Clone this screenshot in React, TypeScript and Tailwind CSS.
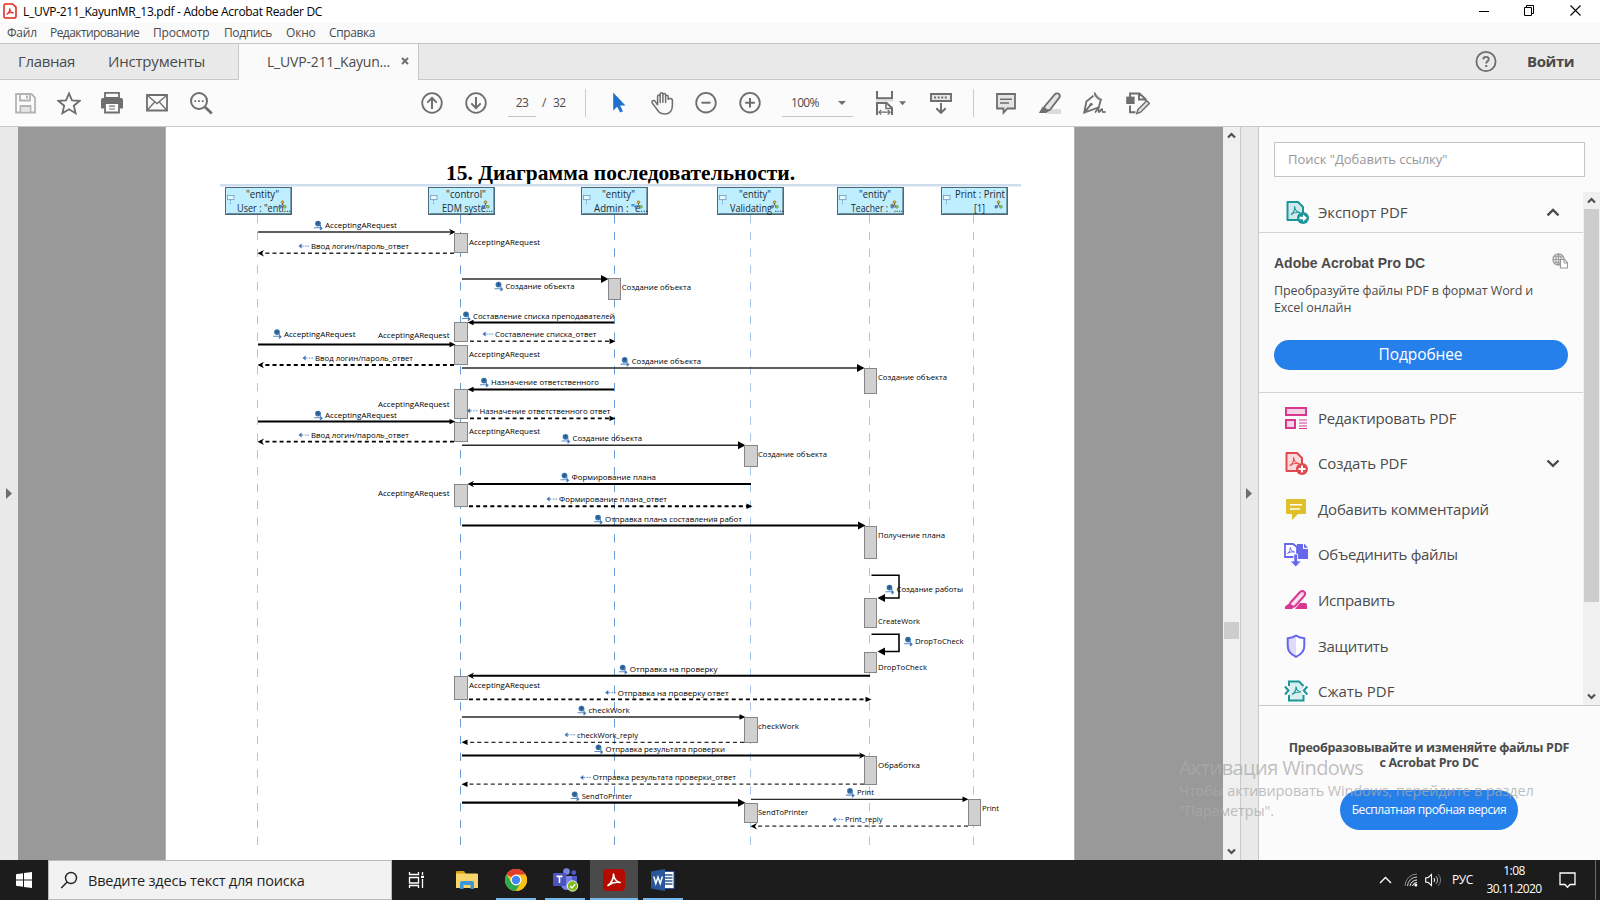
import type { ReactNode } from "react";

const G = "#6e6e6e";

function Icon({ children, size = 24, className = "" }: { children: ReactNode; size?: number; className?: string }) {
  return (
    <svg width={size} height={size} viewBox={`0 0 ${size} ${size}`} fill="none" className={`shrink-0 ${className}`}>
      {children}
    </svg>
  );
}

/* ---------- Window chrome ---------- */

function TitleBar() {
  return (
    <div className="flex h-[23px] items-center bg-white text-black">
      <svg width="14" height="16" viewBox="0 0 14 16" className="ml-[3px] -mt-px" fill="none">
        <path d="M2.5 1H9.5L13 4.2V13.5A1.5 1.5 0 0 1 11.5 15H2.5A1.5 1.5 0 0 1 1 13.5V2.5A1.5 1.5 0 0 1 2.5 1Z" stroke="#e2231a" strokeWidth="1.5" fill="#fff" />
        <path d="M3.5 11.5C5 10.5 6.8 7.5 6.8 5.2M6.8 5.2C6.8 7.5 8.5 9.8 10.8 10M3.5 11.5C5 9.8 8.5 9.2 10.8 10" stroke="#e2231a" strokeWidth="1.1" />
      </svg>
      <span className="ml-[6px] w-[310px] whitespace-nowrap text-[12px] tracking-[-0.29px]">L_UVP-211_KayunMR_13.pdf - Adobe Acrobat Reader DC</span>
      <div className="ml-auto flex items-center pr-[19px] pb-[2px]">
        <svg width="10" height="10" viewBox="0 0 10 10"><path d="M0 5.5H10" stroke="#000" /></svg>
        <svg width="11" height="11" viewBox="0 0 11 11" className="ml-[35px]" fill="none"><path d="M.5 2.5H7.5V10.5H.5ZM2.5 2.5V.5H9.5V8.5H7.5" stroke="#000" /></svg>
        <svg width="11" height="11" viewBox="0 0 11 11" className="ml-[35px]"><path d="M.5 .5L10.5 10.5M10.5 .5L.5 10.5" stroke="#000" strokeWidth="1.1" /></svg>
      </div>
    </div>
  );
}

function MenuBar() {
  return (
    <div className="flex h-[20px] items-center bg-[#fafafa] pl-[7px] text-[12px] leading-[18px] text-[#4b4b4b] whitespace-nowrap">
      <span className="w-[43px] tracking-[-0.2px]">Файл</span>
      <span className="w-[103px] tracking-[-0.56px]">Редактирование</span>
      <span className="w-[71px] tracking-[-0.2px]">Просмотр</span>
      <span className="w-[62px] tracking-[-0.4px]">Подпись</span>
      <span className="w-[43px] tracking-[-0.2px]">Окно</span>
      <span className="tracking-[-0.4px]">Справка</span>
    </div>
  );
}

function TabBar() {
  return (
    <div className="flex h-[37px] border-t border-[#c8c8c8] bg-[#e9e9e9] text-[15px] text-[#4b4b4b] whitespace-nowrap">
      <div className="flex w-[238px] items-center border-b border-[#c8c8c8] pl-[18px]">
        <span className="w-[90px] tracking-[-0.35px]">Главная</span>
        <span className="tracking-[-0.2px]">Инструменты</span>
      </div>
      <div className="flex w-[181px] items-center border-x border-[#c8c8c8] bg-[#fafafa] pb-px pl-[28px] text-[14px]">
        <span className="w-[134px] tracking-[-0.2px]">L_UVP-211_Kayun...</span>
        <svg width="8" height="8" viewBox="0 0 8 8" className="-mt-px"><path d="M1 1L7 7M7 1L1 7" stroke="#6e6e6e" strokeWidth="2" /></svg>
      </div>
      <div className="flex flex-1 items-center justify-end border-b border-[#c8c8c8] pr-[26px]">
        <Icon size={22}>
          <circle cx="11" cy="10.5" r="9.6" stroke={G} strokeWidth="1.8" />
          <path d="M8.3 8.4C8.4 6.8 9.5 5.9 11 5.9C12.6 5.9 13.7 6.8 13.7 8.2C13.7 10.2 11.2 10.4 11.2 12.6" stroke={G} strokeWidth="1.9" />
          <path d="M10.1 14.1H12.3V16H10.1Z" fill={G} />
        </Icon>
        <span className="ml-[30px] w-[47px] text-[15px] font-bold tracking-[-0.4px]">Войти</span>
      </div>
    </div>
  );
}

function Toolbar() {
  return (
    <div className="flex h-[47px] items-center border-b border-[#c8c8c8] bg-[#fbfbfb] pl-[13px] text-[12px] text-[#4b4b4b]">
      <Icon>
        <path d="M3 3H18.5L22 6.5V21.5H3Z" stroke="#b3b3b3" strokeWidth="1.8" />
        <path d="M7 3V9.5H17V3M7.5 21.5V15H17.5V21.5" stroke="#b3b3b3" strokeWidth="1.8" />
        <path d="M8.5 16H16.5V20.6H8.5Z" fill="#e4e4e4" />
        <path d="M13 4.5H15V7.5H13Z" fill="#b3b3b3" />
      </Icon>
      <Icon className="ml-[20px]">
        <path d="M12 2.4L15 9.3L22.6 9.9L16.8 14.7L18.6 22.2L12 18.2L5.4 22.2L7.2 14.7L1.4 9.9L9 9.3Z" stroke={G} strokeWidth="1.8" />
      </Icon>
      <Icon className="ml-[19px]">
        <path d="M5 1.8H19V7H5Z" stroke={G} strokeWidth="1.8" />
        <path d="M3 7H21A2 2 0 0 1 23 9V17.5H19.5V12.5H4.5V17.5H1V9A2 2 0 0 1 3 7Z" fill={G} />
        <path d="M5 12H19V21.5H5Z" fill="#fff" stroke={G} strokeWidth="1.8" />
        <path d="M9 15.2H15M9 18H15" stroke={G} strokeWidth="1.2" />
      </Icon>
      <Icon className="ml-[21px]">
        <path d="M2 4H22V19.5H2Z" stroke={G} strokeWidth="1.8" />
        <path d="M2.5 4.5L12 12.6L21.5 4.5M2.5 19L9.4 11.2M21.5 19L14.6 11.2" stroke={G} strokeWidth="1.3" />
      </Icon>
      <Icon className="ml-[20px]">
        <circle cx="10" cy="10" r="8" stroke={G} strokeWidth="2" />
        <path d="M16 16L22.8 22.6" stroke={G} strokeWidth="2.8" />
        <path d="M5.4 9.2H7.2V11H5.4ZM9.1 9.2H10.9V11H9.1ZM12.8 9.2H14.6V11H12.8Z" fill={G} />
      </Icon>
      <Icon className="ml-[207px]">
        <circle cx="12" cy="12" r="9.8" stroke={G} strokeWidth="1.8" />
        <path d="M12 18V7.5M7.3 11.6L12 6.9L16.7 11.6" stroke={G} strokeWidth="2" />
      </Icon>
      <Icon className="ml-[20px]">
        <circle cx="12" cy="12" r="9.8" stroke={G} strokeWidth="1.8" />
        <path d="M12 6V16.5M7.3 12.4L12 17.1L16.7 12.4" stroke={G} strokeWidth="2" />
      </Icon>
      <span className="ml-[20px] flex h-[28px] w-[28px] items-center justify-center border-b border-[#c4c4c4] tracking-[-0.6px]">23</span>
      <span className="ml-[6px] w-[11px]">/</span>
      <span className="w-[32px] tracking-[-0.6px]">32</span>
      <div className="h-[28px] w-px bg-[#cbcbcb]" />
      <Icon className="ml-[21px]">
        <path d="M6.2 1.5V19.5L10.2 15.7L13.2 21.6L15.9 20.2L13.1 14.4H18.4Z" fill="#1f71cc" />
      </Icon>
      <Icon className="ml-[19px]">
        <path d="M7.6 14.2V5.6C7.6 3.5 10.2 3.5 10.2 5.6V11.5V3.2C10.2 1.2 12.9 1.2 12.9 3.2V11.3V4C12.9 2 15.6 2 15.6 4V11.6V5.8C15.6 3.8 18.2 3.8 18.2 5.8V8.6C18.2 6.9 22.6 6.8 22.4 9.6V14C22.4 19.8 19.4 23 14.6 23C9.6 23 8.2 20.4 5.6 16.4L2.4 12.2C.9 9.8 4 8.6 5.4 10.6L7.6 14.2" stroke={G} strokeWidth="1.5" strokeLinejoin="round" />
      </Icon>
      <Icon className="ml-[20px]">
        <circle cx="12" cy="11.7" r="9.8" stroke={G} strokeWidth="1.8" />
        <path d="M7.5 11.7H16.5" stroke={G} strokeWidth="2" />
      </Icon>
      <Icon className="ml-[20px]">
        <circle cx="12" cy="11.7" r="9.8" stroke={G} strokeWidth="1.8" />
        <path d="M7.2 11.7H16.8M12 6.9V16.5" stroke={G} strokeWidth="2" />
      </Icon>
      <div className="ml-[20px] flex h-[28px] w-[71px] items-center border-b border-[#c4c4c4] pl-[9px]">
        <span className="w-[47px] tracking-[-0.7px]">100%</span>
        <svg width="8" height="4" viewBox="0 0 8 4"><path d="M0 0H8L4 4Z" fill={G} /></svg>
      </div>
      <svg width="36" height="24" viewBox="0 0 36 24" fill="none" className="ml-[20px]">
        <path d="M4 0V7.2H19V0" stroke={G} strokeWidth="2" />
        <path d="M3 9H20V10.6H3Z" fill="#dcdcdc" />
        <path d="M4 24V12H13.6L19 17V24" stroke={G} strokeWidth="2" />
        <path d="M13 12V17.5H19" stroke={G} strokeWidth="1.5" />
        <path d="M6 21.2H17M8.3 18.8L5.9 21.2L8.3 23.6M14.7 18.8L17.1 21.2L14.7 23.6" stroke={G} strokeWidth="1.2" />
        <path d="M26 10.3H33L29.5 14.3Z" fill={G} />
      </svg>
      <Icon className="ml-[20px]">
        <path d="M2 3H22V10H2Z" fill="#e9e9e9" stroke={G} strokeWidth="1.9" />
        <path d="M5 6.5H19" stroke={G} strokeWidth="2.2" strokeDasharray="2 1.6" />
        <path d="M12 12V21.5M7.3 17.2L12 21.8L16.7 17.2" stroke={G} strokeWidth="1.9" />
      </Icon>
      <div className="ml-[20px] h-[28px] w-px bg-[#cbcbcb]" />
      <Icon className="ml-[20px]">
        <path d="M3 3H21V17.5H13.5L9.5 21.8V17.5H3Z" fill="#e4e4e4" stroke={G} strokeWidth="1.8" />
        <path d="M6 8.2H18M6 12H15" stroke={G} strokeWidth="1.5" />
      </Icon>
      <Icon className="ml-[20px]">
        <path d="M9 23L12 18H23V23Z" fill="#dcdcdc" />
        <path d="M6.5 15.5L17 3.2C18.6 1.5 22.6 2.4 21.7 6L12 18.8C9.8 20 5.6 18.4 6.5 15.5Z" fill="#e4e4e4" stroke={G} strokeWidth="1.8" />
        <path d="M4.8 15.5L10.8 20.3L8.4 22H.8Z" fill={G} />
      </Icon>
      <Icon className="ml-[20px]">
        <path d="M13 1.5L21 8.5L18 11L11 5Z" fill="#dcdcdc" />
        <path d="M12.6 1.5C12.9 4.2 15.4 7 18.8 8.8L16.8 16.4L2.2 21.6L4.4 10.6L11.4 4.8M2.2 21.6L8.8 13.6" stroke={G} strokeWidth="1.8" />
        <circle cx="9.2" cy="13.2" r="1.5" fill={G} />
        <path d="M12.8 21.4C14.5 20.6 14.7 17.6 16.4 17.4C17 18.6 15.8 21 17.2 21C18.6 20.6 18.6 17.8 20 18C20.6 19 19.8 21 21.2 21.2L23.6 20.8" stroke={G} strokeWidth="1.7" />
      </Icon>
      <Icon className="ml-[20px]">
        <path d="M4 6V2.5H13.5L19.6 8.2V10M13 2.5V8.5H19.6" stroke={G} strokeWidth="1.9" />
        <path d="M.2 5.6H8.6V13H.2Z" fill={G} />
        <path d="M4 14.5V21.2H9.5" stroke={G} strokeWidth="1.9" />
        <path d="M12 18.5L20.8 9.8L23.4 12.4L14.6 21.2L10.8 22.6Z" fill="#e4e4e4" stroke={G} strokeWidth="1.5" />
      </Icon>
    </div>
  );
}

/* ---------- Sequence diagram ---------- */

type Head = { x: number; a: string; ax: [number, number]; b: string; bx: [number, number] };
const heads: Head[] = [
  { x: 225.5, a: '"entity"', ax: [246, 279], b: 'User : "enti...', bx: [237, 291] },
  { x: 428.5, a: '"control"', ax: [446, 486], b: "EDM syste...", bx: [442, 493] },
  { x: 581.5, a: '"entity"', ax: [602, 635], b: 'Admin : "e...', bx: [594, 648] },
  { x: 717.5, a: '"entity"', ax: [739, 771], b: "Validating :...", bx: [730, 784] },
  { x: 837.5, a: '"entity"', ax: [859, 891], b: 'Teacher : ":...', bx: [851, 903] },
  { x: 941.5, a: "Print : Print", ax: [955, 1005], b: "[1]", bx: [974, 985] },
];

const lifelines: [number, string][] = [
  [257.5, "#a9c6e6"],
  [460.5, "#6a9bd2"],
  [614.5, "#6a9bd2"],
  [750.5, "#a9c6e6"],
  [869.5, "#a9c6e6"],
  [973.5, "#a9c6e6"],
];

const bars: [number, number, number][] = [
  [454.5, 233.5, 252.5], [454.5, 322.5, 341.5], [454.5, 345.5, 364.5], [454.5, 389.5, 418.5],
  [454.5, 422.5, 441.5], [454.5, 484.5, 506.5], [454.5, 676.5, 699.5],
  [608.5, 278.5, 299.5], [744.5, 445.5, 466.5], [744.5, 717.5, 742.5], [744.5, 803.5, 822.5],
  [864.5, 368.5, 393.5], [864.5, 526.5, 558.5], [864.5, 598.5, 627.5], [864.5, 652.5, 672.5],
  [864.5, 756.5, 784.5], [968.5, 799.5, 825.5],
];

type ArrowHead = "open" | "small" | "big";
type Line = { from: number; to: number; y: number; w: number; head: ArrowHead; dash?: boolean };
const lines: Line[] = [
  { from: 258, to: 455, y: 232, w: 1.6, head: "open" },
  { from: 454, to: 258, y: 253.3, w: 1.6, head: "open", dash: true },
  { from: 462, to: 608, y: 279, w: 1.6, head: "big" },
  { from: 614, to: 468, y: 322.5, w: 2, head: "small" },
  { from: 470, to: 615, y: 341.3, w: 1.5, head: "small", dash: true },
  { from: 258, to: 455, y: 344.5, w: 2, head: "small" },
  { from: 454, to: 258, y: 365, w: 2, head: "open", dash: true },
  { from: 462, to: 864, y: 368, w: 1.5, head: "big" },
  { from: 614, to: 468, y: 389.5, w: 2, head: "small" },
  { from: 470, to: 615, y: 418.4, w: 1.8, head: "small", dash: true },
  { from: 258, to: 455, y: 421.6, w: 2, head: "small" },
  { from: 454, to: 258, y: 441.7, w: 1.8, head: "open", dash: true },
  { from: 462, to: 745, y: 445.2, w: 1.6, head: "big" },
  { from: 751, to: 468, y: 484, w: 2, head: "open" },
  { from: 469, to: 752, y: 506.2, w: 2, head: "small", dash: true },
  { from: 462, to: 865, y: 525.6, w: 2, head: "big" },
  { from: 870, to: 468, y: 675.8, w: 2, head: "open" },
  { from: 469, to: 871, y: 699.4, w: 1.7, head: "small", dash: true },
  { from: 462, to: 745, y: 717, w: 1.6, head: "small" },
  { from: 744, to: 462, y: 742.3, w: 1.3, head: "small", dash: true },
  { from: 462, to: 865, y: 755.6, w: 2, head: "open" },
  { from: 864, to: 462, y: 784.2, w: 1.3, head: "small", dash: true },
  { from: 462, to: 745, y: 802.7, w: 2.2, head: "big" },
  { from: 751, to: 968, y: 799.3, w: 1.2, head: "small" },
  { from: 968, to: 751, y: 826.2, w: 1.3, head: "open", dash: true },
];

type Mark = "op" | "re" | "";
const labels: [string, number, number, number, Mark][] = [
  ["AcceptingARequest", 325, 397, 228, "op"],
  ["Ввод логин/пароль_ответ", 311, 409, 249, "re"],
  ["AcceptingARequest", 469, 540, 245, ""],
  ["Создание объекта", 505.5, 574.5, 289, "op"],
  ["Создание объекта", 621.7, 691, 290.3, ""],
  ["Составление списка преподавателей", 473, 614.5, 318.7, "op"],
  ["Составление списка_ответ", 495, 596.5, 337, "re"],
  ["AcceptingARequest", 284, 355.5, 336.5, "op"],
  ["AcceptingARequest", 378, 449.5, 338, ""],
  ["Ввод логин/пароль_ответ", 315, 413, 361, "re"],
  ["AcceptingARequest", 469, 540, 357, ""],
  ["Создание объекта", 631.7, 701, 364.3, "op"],
  ["Создание объекта", 878, 947, 380, ""],
  ["Назначение ответственного", 491, 599, 385, "op"],
  ["AcceptingARequest", 378, 449.5, 407, ""],
  ["Назначение ответственного ответ", 479.5, 610.5, 413.7, "re"],
  ["AcceptingARequest", 325, 397, 418, "op"],
  ["Ввод логин/пароль_ответ", 311, 409, 438, "re"],
  ["AcceptingARequest", 469, 540, 434, ""],
  ["Создание объекта", 572.5, 642, 441.2, "op"],
  ["Создание объекта", 758, 827, 457, ""],
  ["Формирование плана", 571.5, 656, 480, "op"],
  ["AcceptingARequest", 378, 449.5, 496.3, ""],
  ["Формирование плана_ответ", 559, 667, 502, "re"],
  ["Отправка плана составления работ", 605, 742, 522, "op"],
  ["Получение плана", 878, 945, 538, ""],
  ["Создание работы", 896.5, 963, 592, "op"],
  ["CreateWork", 878, 920, 624, ""],
  ["DropToCheck", 915, 963.5, 644, "op"],
  ["DropToCheck", 878, 927, 669.5, ""],
  ["Отправка на проверку", 629.7, 717.5, 672, "op"],
  ["AcceptingARequest", 469, 540, 688, ""],
  ["Отправка на проверку ответ", 617.7, 728.7, 695.5, "re"],
  ["checkWork", 588.5, 629.7, 713, "op"],
  ["checkWork", 758, 799, 729, ""],
  ["checkWork_reply", 577, 638, 737.7, "re"],
  ["Отправка результата проверки", 605.5, 725, 751.7, "op"],
  ["Обработка", 878, 920, 768, ""],
  ["Отправка результата проверки_ответ", 592.7, 736, 780.3, "re"],
  ["SendToPrinter", 581.7, 632, 798.7, "op"],
  ["SendToPrinter", 758, 808, 815, ""],
  ["Print", 857, 874, 795.3, "op"],
  ["Print", 982, 999, 811.3, ""],
  ["Print_reply", 845, 882.5, 822.3, "re"],
];

function Tip({ x, y, dir, head }: { x: number; y: number; dir: 1 | -1; head: ArrowHead }) {
  if (head === "big") return <path d={`M${x} ${y}L${x - 7.5 * dir} ${y - 4}V${y + 4}Z`} fill="#000" />;
  if (head === "small") return <path d={`M${x} ${y}L${x - 6 * dir} ${y - 2.7}V${y + 2.7}Z`} fill="#000" />;
  return (
    <path d={`M${x} ${y}L${x - 6.5 * dir} ${y - 3.2}L${x - 4.5 * dir} ${y}L${x - 6.5 * dir} ${y + 3.2}Z`} fill="#000" />
  );
}

function Diagram() {
  return (
    <svg width="908" height="733" viewBox="166 127 908 733" fill="none" className="block">
      <text x="446" y="180" textLength="349" lengthAdjust="spacingAndGlyphs" fontSize="21" fontWeight="700" fill="#000" className="font-['Liberation_Serif',serif]">
        15. Диаграмма последовательности.
      </text>
      <path d="M220 184H1021V186.6H220Z" fill="#cfdeee" />
      {lifelines.map(([x, c]) => (
        <path key={x} d={`M${x} 215V845`} stroke={c} strokeWidth="1" strokeDasharray="8.3 8.5" />
      ))}
      {heads.map((h) => (
        <g key={h.x}>
          <rect x={h.x} y="187.5" width="66" height="27" fill="#bfeeff" stroke="#4c6b7a" />
          <path d={`M${h.x + 1} 214H${h.x + 65.6}V188`} stroke="#4c6b7a" strokeWidth="1.4" />
          <rect x={h.x + 2} y="195.5" width="6.5" height="4" fill="#e8f8ff" stroke="#7fa3c8" strokeWidth=".9" />
          <path d={`M${h.x + 5} 200V205`} stroke="#7fa3c8" strokeDasharray="1.5 1" />
          <text x={h.ax[0]} y="198" textLength={h.ax[1] - h.ax[0]} lengthAdjust="spacingAndGlyphs" fontSize="10.5" fill="#1c2a33">{h.a}</text>
          <text x={h.bx[0]} y="212" textLength={h.bx[1] - h.bx[0]} lengthAdjust="spacingAndGlyphs" fontSize="10.5" fill="#1c2a33">{h.b}</text>
          <path d={`M${h.x + 57} 203V205L${h.x + 55} 206.8M${h.x + 57} 205L${h.x + 59.3} 206.8`} stroke="#345" strokeWidth=".8" />
          <circle cx={h.x + 57} cy="202.2" r="1.4" fill="#e0b030" stroke="#6d5a1a" strokeWidth=".5" />
          <circle cx={h.x + 54.7} cy="206.8" r="1.4" fill="#5d8fd0" stroke="#2d4d7a" strokeWidth=".5" />
          <circle cx={h.x + 59.4} cy="206.8" r="1.4" fill="#9fd060" stroke="#3a6a20" strokeWidth=".5" />
        </g>
      ))}
      {lines.map((l) => {
        const dir = l.to > l.from ? 1 : -1;
        return (
          <g key={`${l.y}-${l.from}`}>
            <path d={`M${l.from} ${l.y}H${l.to - 3 * dir}`} stroke={l.w < 1.7 ? "#2b2b2b" : "#000"} strokeWidth={l.w} strokeDasharray={l.dash ? "4 3.1" : undefined} />
            <Tip x={l.to + 0.5 * dir} y={l.y} dir={dir} head={l.head} />
          </g>
        );
      })}
      {bars.map(([x, top, bottom]) => (
        <rect key={`${x}-${top}`} x={x} y={top} width={x < 460 || x === 744.5 ? 13 : 12} height={bottom - top} fill="#d0d0d0" stroke="#868686" />
      ))}
      <path d="M871.5 575.3H899V598H882" stroke="#000" strokeWidth="1.5" />
      <Tip x={877.5} y={598} dir={-1} head="big" />
      <path d="M871.5 634.3H899V651.5H882" stroke="#000" strokeWidth="1.6" />
      <Tip x={877.5} y={651.5} dir={-1} head="big" />
      {labels.map(([t, x1, x2, y, m]) => (
        <g key={`${t}-${x1}-${y}`}>
          {m === "op" && (
            <g>
              <circle cx={x1 - 7} cy={y - 4.4} r="2.9" fill="#3a74ab" />
              <path d={`M${x1 - 8.6} ${y - 4.8}H${x1 - 5.6}M${x1 - 7} ${y - 6.4}V${y - 3}`} stroke="#1f4f80" strokeWidth=".8" />
              <path d={`M${x1 - 11} ${y - 0.2}H${x1 - 4}M${x1 - 4.6} ${y - 3}V${y + 2.2}`} stroke="#5b8cc4" strokeWidth="1.1" />
              <path d={`M${x1 - 4.4} ${y - 1.8}L${x1 - 2.2} ${y + 0.2}L${x1 - 4.4} ${y + 2.2}Z`} fill="#3f6fb5" />
            </g>
          )}
          {m === "re" && (
            <g>
              <path d={`M${x1 - 12.5} ${y - 2.9}L${x1 - 9.4} ${y - 5.4}V${y - 0.4}Z`} fill="#3f6fb5" />
              <path d={`M${x1 - 9.5} ${y - 2.9}H${x1 - 7.5}M${x1 - 6.2} ${y - 2.9}H${x1 - 4.6}M${x1 - 3.6} ${y - 2.9}H${x1 - 2}`} stroke="#5f8cc8" strokeWidth="1" />
            </g>
          )}
          <text x={x1} y={y} textLength={x2 - x1} lengthAdjust="spacingAndGlyphs" fontSize="8" fill="#000">{t}</text>
        </g>
      ))}
    </svg>
  );
}

/* ---------- Tools panel ---------- */

function PdfSheet({ c, bg }: { c: string; bg: string }) {
  return (
    <>
      <path d="M2.5 2H13L18 7V20H2.5Z" fill={bg} stroke={c} strokeWidth="2" strokeLinejoin="round" />
      <path d="M5.8 14.8C8.4 13 10 9.8 9.6 6.2C10 9.8 12 12.2 15 12.6C11.6 11.8 8.6 12.6 5.8 14.8Z" stroke={c} strokeWidth="1.1" />
    </>
  );
}

const tools: { name: string; icon: ReactNode; open?: boolean; track: string }[] = [
  {
    name: "Редактировать PDF", track: "tracking-[-0.18px]",
    icon: (
      <>
        <path d="M2 2H22V9H2ZM2 14H11V22H2Z" fill="#f6d2e6" stroke="#d83790" strokeWidth="2" />
        <path d="M15 14H23M15 17H23M15 20H23M15 22.5H23" stroke="#d83790" strokeWidth="1" />
      </>
    ),
  },
  {
    name: "Создать PDF", open: true, track: "tracking-[-0.1px]",
    icon: (
      <>
        <PdfSheet c="#e34850" bg="#f8dadb" />
        <circle cx="18" cy="18" r="6" fill="#e34850" />
        <path d="M14.5 18H21.5M18 14.5V21.5" stroke="#fff" strokeWidth="2" />
      </>
    ),
  },
  {
    name: "Добавить комментарий", track: "tracking-[-0.2px]",
    icon: (
      <>
        <path d="M3 2H21A1 1 0 0 1 22 3V17H14L8 23V17H3A1 1 0 0 1 2 16V3A1 1 0 0 1 3 2Z" fill="#dfbf2b" />
        <path d="M6 7.8H18M6 12H16" stroke="#fff" strokeWidth="1.6" />
      </>
    ),
  },
  {
    name: "Объединить файлы", track: "tracking-[-0.33px]",
    icon: (
      <>
        <path d="M1 1H9L13 4V14H1Z" fill="#fff" stroke="#6767ec" strokeWidth="1.8" />
        <path d="M3.5 10.5C5.5 9.3 6.4 6.8 6.3 4.5C6.6 7 8 8.6 10.5 9C8 8.6 5.5 9 3.5 10.5Z" stroke="#6767ec" strokeWidth="1" />
        <path d="M13 1H19V6H24V16H13ZM20 .5L24 4.8H20Z" fill="#6767ec" />
        <path d="M9.8 11H13.6V18H17.5L11.7 24L6 18H9.8Z" fill="#6767ec" stroke="#fff" strokeWidth=".9" />
      </>
    ),
  },
  {
    name: "Исправить", track: "tracking-[-0.3px]",
    icon: (
      <>
        <path d="M11 21L16 15H21A2 2 0 0 1 23 17V21Z" fill="#d83790" />
        <path d="M6.5 14.5L16 4C19 1.5 22.5 4.8 20.5 7.6L11 18.2C9 19.5 4.5 17 6.5 14.5Z" fill="#f6d2e6" stroke="#d83790" strokeWidth="1.9" />
        <path d="M9 16L17 7" stroke="#fff" strokeWidth="1" />
        <path d="M5 15.5L10 19.5L8 21H1V18.5Z" fill="#d83790" />
      </>
    ),
  },
  {
    name: "Защитить", track: "tracking-[-0.3px]",
    icon: (
      <>
        <path d="M12 1.5C14.6 3.2 17.5 4 20.5 4V12C20.5 17 17.5 20.5 12 23C6.5 20.5 3.5 17 3.5 12V4C6.5 4 9.4 3.2 12 1.5Z" fill="#fff" />
        <path d="M12 1.5V23C6.5 20.5 3.5 17 3.5 12V4C6.5 4 9.4 3.2 12 1.5Z" fill="#dedcfa" />
        <path d="M12 1.7C14.6 3.3 17.5 4.2 20.3 4.2V12C20.3 17 17.3 20.3 12 22.8C6.7 20.3 3.7 17 3.7 12V4.2C6.5 4.2 9.4 3.3 12 1.7Z" stroke="#6767ec" strokeWidth="2" />
      </>
    ),
  },
  {
    name: "Сжать PDF", track: "tracking-[0.02px]",
    icon: (
      <>
        <path d="M5 8V2.5H16L19.5 6V8L17 11.5L19.5 15V21.5H5V15L7 11.5Z" fill="#d8eeee" />
        <path d="M5 7V2.5H15L19.5 7M5 16V21.5H19.5V16" stroke="#1b959a" strokeWidth="2" />
        <path d="M1 7.5L4.5 11.5L1 15.5M23.3 7.5L19.8 11.5L23.3 15.5" stroke="#1b959a" strokeWidth="2" />
        <path d="M8 15.5C10.4 14 12.3 11 12 7.5C12.4 11 14 12.8 17 13C14 12.8 10.5 13.4 8 15.5Z" stroke="#1b959a" strokeWidth="1.2" />
      </>
    ),
  },
];

function Chevron({ up }: { up?: boolean }) {
  return (
    <svg width="14" height="9" viewBox="0 0 14 9" fill="none">
      <path d={up ? "M1.5 7.3L7 2L12.5 7.3" : "M1.5 1.5L7 6.8L12.5 1.5"} stroke="#4b4b4b" strokeWidth="2.4" />
    </svg>
  );
}

function ScrollArrow({ up }: { up?: boolean }) {
  return (
    <svg width="9" height="7" viewBox="0 0 9 7" fill="none">
      <path d={up ? "M1 5.5L4.5 2L8 5.5" : "M1 1.5L4.5 5L8 1.5"} stroke="#505050" strokeWidth="2.2" />
    </svg>
  );
}

function ToolsPanel() {
  return (
    <aside className="flex w-[342px] shrink-0 flex-col border-l border-[#c8c8c8] bg-[#fbfbfb] text-[#4b4b4b]">
      <div className="mt-[15px] ml-[15px] flex h-[35px] w-[311px] items-center border border-[#c4c4c4] bg-white pt-px pl-[13px] text-[13px] tracking-[-0.02px] text-[#979797]">
        Поиск "Добавить ссылку"
      </div>
      <div className="mt-[15px] flex h-[513px] overflow-hidden">
        <div className="flex w-[324px] flex-col whitespace-nowrap">
          <div className="flex h-[41px] shrink-0 items-center border-b border-[#d3d3d3] pl-[26px] text-[15px]">
            <Icon>
              <PdfSheet c="#1b959a" bg="#cfe9ea" />
              <circle cx="18" cy="18" r="6" fill="#1b959a" />
              <path d="M14.5 16.8H18V14.3L22 18L18 21.7V19.2H14.5Z" fill="#fff" />
            </Icon>
            <span className="ml-[9px] flex-1 tracking-[-0.1px]">Экспорт PDF</span>
            <div className="mr-[23px]"><Chevron up /></div>
          </div>
          <div className="h-[160px] shrink-0 border-b border-[#d3d3d3] pt-[20px] pl-[15px]">
            <div className="flex w-[294px] items-start justify-between">
              <b className="font-['Liberation_Sans',sans-serif] text-[14px] leading-[20px]">Adobe Acrobat Pro DC</b>
              <svg width="16" height="16" viewBox="0 0 16 16" fill="none">
                <circle cx="6.5" cy="6.5" r="5.6" fill="#e4e4e4" stroke="#9a9a9a" strokeWidth="1.2" />
                <path d="M1 6.5H12M6.5 1V12M2 3.7H11M2 9.3H11M6.5 1C3 4 3 9 6.5 12C10 9 10 4 6.5 1" stroke="#9a9a9a" strokeWidth=".9" />
                <path d="M8.5 6.5H12.5L15.5 9.5V15H8.5Z" fill="#fff" stroke="#9a9a9a" strokeWidth="1.2" />
                <path d="M12 6.5V10H15.5" stroke="#9a9a9a" strokeWidth="1" />
              </svg>
            </div>
            <p className="mt-[9px] text-[12.5px] leading-[17px] tracking-[-0.09px]">Преобразуйте файлы PDF в формат Word и<br />Excel онлайн</p>
            <div className="mt-[24px] flex h-[30px] w-[294px] items-center justify-center rounded-full bg-[#2680eb] pr-px text-[15.5px] tracking-[-0.1px] text-white">Подробнее</div>
          </div>
          <div className="pt-[2px]">
            {tools.map((t) => (
              <div key={t.name} className="flex h-[45.6px] items-center pl-[25px] text-[15px]">
                <Icon>{t.icon}</Icon>
                <span className={`ml-[10px] flex-1 ${t.track}`}>{t.name}</span>
                {t.open && <div className="mr-[23px]"><Chevron /></div>}
              </div>
            ))}
          </div>
        </div>
        <div className="flex flex-1 flex-col items-center bg-[#f0f0f0] pb-[4px]">
          <div className="flex h-[17px] items-center"><ScrollArrow up /></div>
          <div className="ml-px h-[393px] w-[15px] self-start bg-[#cdcdcd]" />
          <div className="mt-auto flex h-[9px] items-center"><ScrollArrow /></div>
        </div>
      </div>
      <div className="flex flex-1 flex-col items-center border-t border-[#c8c8c8] pt-[34px] pr-px">
        <b className="text-center text-[12.5px] leading-[15px] tracking-[-0.3px]">Преобразовывайте и изменяйте файлы PDF<br />с Acrobat Pro DC</b>
        <div className="mt-[20px] flex h-[40px] w-[178px] items-center justify-center rounded-full bg-[#2680eb] text-[12px] tracking-[-0.4px] whitespace-nowrap text-white">Бесплатная пробная версия</div>
      </div>
    </aside>
  );
}

/* ---------- Taskbar ---------- */

function TaskApp({ children, running, active }: { children: ReactNode; running?: boolean; active?: boolean }) {
  return (
    <div className={`flex h-full w-[48px] flex-col items-center justify-end ${active ? "bg-[#4a4a4a]" : ""}`}>
      <div className="flex h-[38px] items-center pt-[2px]">{children}</div>
      <div className={`h-[2px] ${active ? "w-[48px]" : "w-[40px]"} ${running ? "bg-[#76b9ed]" : ""}`} />
    </div>
  );
}

function Taskbar() {
  return (
    <div className="flex h-[40px] items-center bg-[#1c1c1c] text-white">
      <div className="flex w-[48px] justify-center">
        <svg width="16" height="16" viewBox="0 0 16 16"><path d="M0 2.2L7 1.2V7.5H0ZM8 1L16 0V7.5H8ZM0 8.5H7V14.8L0 13.8ZM8 8.5H16V16L8 15Z" fill="#fff" /></svg>
      </div>
      <div className="flex h-[40px] w-[344px] items-center border border-[#b9b9b9] bg-[#f2f2f2] pl-[11px] text-[#1f1f1f]">
        <svg width="18" height="18" viewBox="0 0 18 18" fill="none"><circle cx="11" cy="7" r="5.5" stroke="#222" strokeWidth="1.4" /><path d="M7.2 11L1.2 17" stroke="#222" strokeWidth="1.5" /></svg>
        <span className="ml-[10px] pt-px text-[14.5px] tracking-[-0.2px] whitespace-nowrap">Введите здесь текст для поиска</span>
      </div>
      <div className="flex h-full w-[48px] items-center justify-center">
        <svg width="17" height="16" viewBox="0 0 17 16" fill="none"><path d="M1.5 0V2.5H10.5V0M1.5 5.5H10.5V11H1.5ZM1.5 16V13.5H10.5V16M14.5 0V3M14.5 7V16" stroke="#fff" strokeWidth="1.3" /><path d="M13 3.8H16V6H13Z" fill="#fff" /></svg>
      </div>
      <div className="w-[3px]" />
      <TaskApp>
        <svg width="22" height="18" viewBox="0 0 22 18"><path d="M0 1A1 1 0 0 1 1 0H8L10 3H0Z" fill="#d9a010" /><path d="M0 2.5H21A1 1 0 0 1 22 3.5V17H0Z" fill="#f9d56b" /><path d="M4 18V12A2 2 0 0 1 6 10H16A2 2 0 0 1 18 12V18H14.5V14H7.5V18Z" fill="#3c96d8" /></svg>
      </TaskApp>
      <div className="w-px" />
      <TaskApp running>
        <svg width="22" height="22" viewBox="0 0 22 22">
          <circle cx="11" cy="11" r="11" fill="#fbc116" />
          <path d="M11 11L1.5 5.5A11 11 0 0 1 20.5 5.5Z" fill="#e33b2e" />
          <path d="M1.5 5.5A11 11 0 0 0 11 22L15.6 13.6L11 11L6.4 13.6Z" fill="#2da94f" />
          <path d="M11 5.5H20.5A11 11 0 0 1 11 22L15.8 13.7Z" fill="#fbc116" />
          <circle cx="11" cy="11" r="5.4" fill="#fff" /><circle cx="11" cy="11" r="4.2" fill="#4484f3" />
        </svg>
      </TaskApp>
      <div className="w-px" />
      <TaskApp running>
        <svg width="26" height="24" viewBox="0 0 26 24" className="ml-px">
          <circle cx="13.5" cy="3.6" r="3.3" fill="#7b83eb" /><circle cx="20.8" cy="4.6" r="2.4" fill="#5059c9" />
          <path d="M15 8H24V14.5A4.5 4.5 0 0 1 15 16Z" fill="#5059c9" />
          <path d="M8 8H19V16A5.5 5.5 0 0 1 8 17Z" fill="#7b83eb" />
          <rect x="0" y="5" width="13" height="13" rx="1" fill="#4b53bc" />
          <path d="M3.5 8.4H9.5M6.5 8.4V15" stroke="#fff" strokeWidth="1.6" />
          <circle cx="19.5" cy="18" r="5.2" fill="#7fba1a" stroke="#fff" strokeWidth=".9" />
          <path d="M17 18L19 20L22.2 16.2" stroke="#fff" strokeWidth="1.3" fill="none" />
        </svg>
      </TaskApp>
      <div className="w-px" />
      <TaskApp running active>
        <svg width="22" height="22" viewBox="0 0 22 22" fill="none"><rect width="22" height="22" rx="4" fill="#b30b00" /><path d="M5 16.5C8 14.5 10.8 9.5 10.5 5C11 9.5 13.5 13 17.2 13.5C13 12.8 8.5 13.8 5 16.5Z" stroke="#fff" strokeWidth="1.6" strokeLinejoin="round" /></svg>
      </TaskApp>
      <div className="w-px" />
      <TaskApp running>
        <svg width="24" height="22" viewBox="0 0 24 22"><path d="M12 2.5H23V19.5H12Z" fill="#fff" stroke="#2b579a" strokeWidth="1" /><path d="M14 6H21.5M14 9H21.5M14 12H21.5M14 15H21.5" stroke="#2b579a" strokeWidth="1.3" /><path d="M0 2.5L14 0V22L0 19.5Z" fill="#2b579a" /><path d="M2.8 7.5L4.8 14.5L7 8L9.2 14.5L11.4 7.5" stroke="#fff" strokeWidth="1.5" fill="none" /></svg>
      </TaskApp>
      <div className="ml-auto flex h-full items-center">
        <svg width="13" height="8" viewBox="0 0 13 8" fill="none"><path d="M1 7L6.5 1.5L12 7" stroke="#fff" strokeWidth="1.4" /></svg>
        <svg width="14" height="14" viewBox="0 0 14 14" fill="none" className="ml-[12px]">
          <path d="M1 13A12 12 0 0 1 13 1" stroke="#8a8a8a" /><path d="M3.5 13A9.5 9.5 0 0 1 13 4" stroke="#cfcfcf" /><path d="M6 13A7 7 0 0 1 13 7" stroke="#fff" /><path d="M8.5 13A4.5 4.5 0 0 1 13 9.5" stroke="#fff" /><circle cx="11.8" cy="12" r="1.5" fill="#fff" />
        </svg>
        <svg width="17" height="14" viewBox="0 0 17 14" fill="none" className="ml-[7px]">
          <path d="M.7 4.7H3L6.5 1.5V12.5L3 9.3H.7Z" stroke="#fff" strokeWidth="1.1" /><path d="M8.8 5A3 3 0 0 1 8.8 9" stroke="#fff" /><path d="M11 3.2A5.5 5.5 0 0 1 11 10.8" stroke="#bbb" /><path d="M13.2 1.2A8.3 8.3 0 0 1 13.2 12.8" stroke="#777" />
        </svg>
        <span className="ml-[10px] w-[24px] text-[12px] tracking-[-0.5px]">РУС</span>
        <div className="ml-[8px] w-[60px] text-center text-[12px] leading-[18px] tracking-[-0.6px]">
          <div>1:08</div>
          <div>30.11.2020</div>
        </div>
        <svg width="17" height="17" viewBox="0 0 17 17" fill="none" className="ml-[15px]"><path d="M1 1H16V12.5H11L8.5 15.2L6 12.5H1Z" stroke="#fff" strokeWidth="1.3" /></svg>
        <div className="ml-[19px] mr-[4px] h-full w-px bg-[#6b6b6b]" />
      </div>
    </div>
  );
}

export default function App() {
  return (
    <div className="relative flex h-[900px] w-[1600px] flex-col overflow-hidden bg-white font-['Open_Sans','Noto_Sans',sans-serif]">
      <TitleBar />
      <MenuBar />
      <TabBar />
      <Toolbar />
      <div className="flex h-[733px]">
        <div className="flex w-[18px] shrink-0 items-center bg-[#e9e9e9] pl-[6px]">
          <svg width="6" height="11" viewBox="0 0 6 11"><path d="M0 0L6 5.5L0 11Z" fill="#6e6e6e" /></svg>
        </div>
        <main className="flex w-[1205px] shrink-0 justify-start bg-[#999999] pl-[147px]">
          <div className="h-full w-[910px] border-x border-[#b4b4b4] bg-white">
            <Diagram />
          </div>
        </main>
        <div className="flex w-[17px] shrink-0 flex-col items-center bg-[#f0f0f0]">
          <div className="flex h-[17px] items-center"><ScrollArrow up /></div>
          <div className="mt-[478px] h-[17px] w-[15px] bg-[#cdcdcd]" />
          <div className="mt-auto flex h-[17px] items-center"><ScrollArrow /></div>
        </div>
        <div className="flex w-[18px] shrink-0 items-center border-l border-[#c8c8c8] bg-[#e9e9e9] pl-[5px]">
          <svg width="6" height="11" viewBox="0 0 6 11"><path d="M0 0L6 5.5L0 11Z" fill="#6e6e6e" /></svg>
        </div>
        <ToolsPanel />
      </div>
      <Taskbar />
      <div className="pointer-events-none absolute top-[754px] left-[1179px] whitespace-nowrap text-[#aaaaaa]/75">
        <div className="text-[20px] leading-[28px] tracking-[-0.6px]">Активация Windows</div>
        <div className="-mt-px text-[14.5px] leading-[20px] tracking-[-0.14px]">Чтобы активировать Windows, перейдите в раздел<br />"Параметры".</div>
      </div>
    </div>
  );
}
